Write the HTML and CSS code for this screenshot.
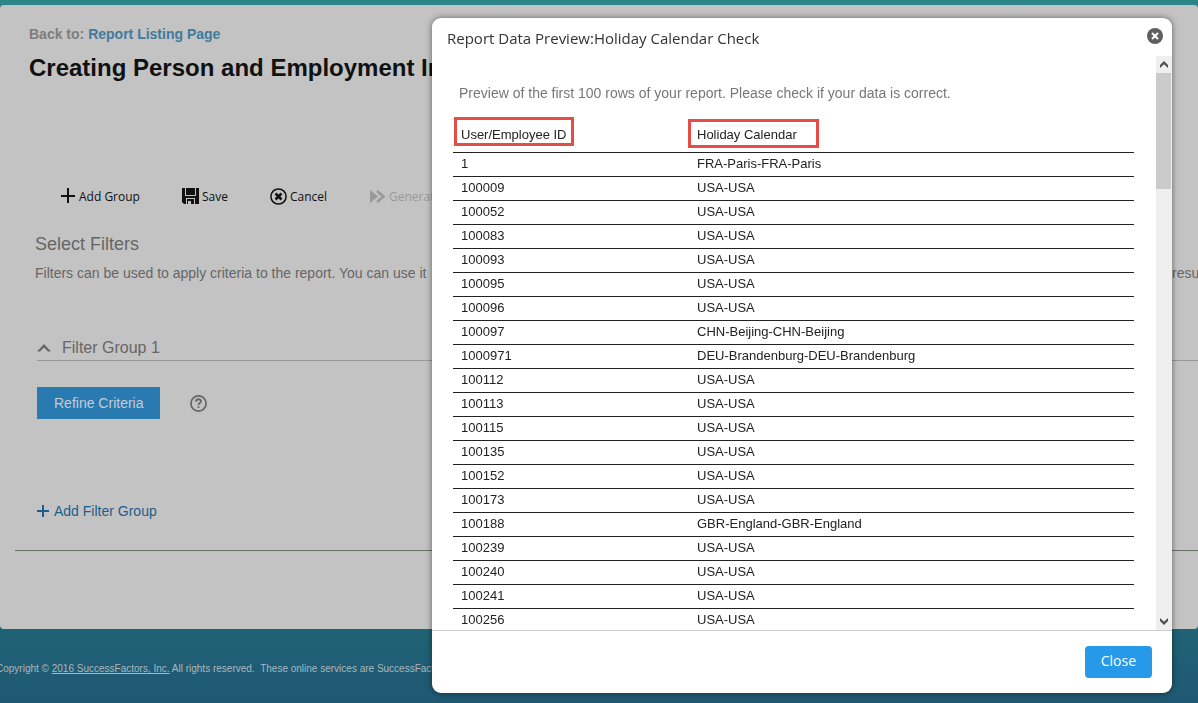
FILE: index.html
```html
<!DOCTYPE html>
<html lang="en">
<head>
<meta charset="utf-8">
<title>Report Data Preview</title>
<link rel="stylesheet" href="styles.css">
</head>
<body>
<main class="page">
  <p class="crumb">Back to: <a href="#">Report Listing Page</a></p>
  <h1 class="title">Creating Person and Employment Info</h1>
  <div class="toolbar">
    <button class="tool" type="button"><svg width="16" height="16" viewBox="0 0 16 16"><path d="M8 0v15M1 8h14" stroke="#111" stroke-width="2" fill="none"/></svg>Add Group</button>
    <button class="tool" type="button"><svg width="17" height="16" viewBox="0 0 17 16"><path d="M0 0h17v16H2L0 14z" fill="#111"/><path d="M3 0h1v7H3zM13 0h1v7h-1zM3 7h11v1H3zM4 10h9v1H4zM4 10h1v6H4zM12 10h1v6h-1zM6 13h3v3H6z" fill="#c3c3c3"/></svg>Save</button>
    <button class="tool" type="button"><svg width="17" height="17" viewBox="0 0 17 17"><circle cx="8.500" cy="8.500" r="7.600" fill="none" stroke="#111" stroke-width="1.500"/><path d="M5.500 5.500l6 6M11.500 5.500l-6 6" stroke="#111" stroke-width="2.600"/></svg>Cancel</button>
    <button class="tool tool-off" type="button" disabled><svg width="17" height="13" viewBox="0 0 17 13"><path d="M1 0l8 6.500L1 13z" fill="#999"/><path d="M8 1l6.500 5.500L8 12" fill="none" stroke="#999" stroke-width="2.600"/></svg>Generate</button>
  </div>
  <section class="filters">
    <h2 class="heading">Select Filters</h2>
    <p class="hint"><span class="hint-start">Filters can be used to apply criteria to the report. You can use it</span><span class="hint-end">results</span></p>
    <div class="group">
      <button class="group-head" type="button"><svg width="14" height="8" viewBox="0 0 14 8"><path d="M0 7.500L7 0l7 7.500h-3L7 3.500 3 7.500z" fill="#666"/></svg>Filter Group 1</button>
      <div class="group-body">
        <button class="refine" type="button">Refine Criteria</button>
        <button class="help" type="button" aria-label="Help"><svg width="17" height="17" viewBox="0 0 17 17"><circle cx="8.500" cy="8.500" r="7.600" fill="none" stroke="#666" stroke-width="1.700"/><path d="M6 6.800c0-3.300 5-3.300 5-.5 0 1.800-2.500 1.700-2.500 3.700" fill="none" stroke="#666" stroke-width="1.800"/><path d="M7.600 11.200h1.800v1.800H7.600z" fill="#666"/></svg></button>
      </div>
      <button class="add" type="button"><svg width="12" height="12" viewBox="0 0 12 12"><path d="M6 0v12M0 6h12" stroke="#1b5f8c" stroke-width="2"/></svg>Add Filter Group</button>
    </div>
  </section>
  <hr class="rule">
</main>
<footer class="footer">Copyright © <a href="#">2016 SuccessFactors, Inc.</a> All rights reserved. &nbsp;These online services are SuccessFactors</footer>

<div class="overlay">
  <div class="dialog" role="dialog" aria-labelledby="dlg-title">
    <header class="dialog-head">
      <h2 class="dialog-title" id="dlg-title">Report Data Preview:Holiday Calendar Check</h2>
      <button class="dismiss" type="button" aria-label="Dismiss"><svg width="16" height="16" viewBox="0 0 16 16"><circle cx="8" cy="8" r="8" fill="#5f5f5f"/><path d="M5 5l6 6M11 5l-6 6" stroke="#fff" stroke-width="2"/></svg></button>
    </header>
    <div class="dialog-body">
      <div class="content">
        <p class="intro">Preview of the first 100 rows of your report. Please check if your data is correct.</p>
        <table class="data">
          <thead><tr><th class="col-id mark-id" scope="col">User/Employee ID</th><th class="mark-cal" scope="col">Holiday Calendar</th></tr></thead>
          <tbody>
            <tr><td>1</td><td>FRA-Paris-FRA-Paris</td></tr>
            <tr><td>100009</td><td>USA-USA</td></tr>
            <tr><td>100052</td><td>USA-USA</td></tr>
            <tr><td>100083</td><td>USA-USA</td></tr>
            <tr><td>100093</td><td>USA-USA</td></tr>
            <tr><td>100095</td><td>USA-USA</td></tr>
            <tr><td>100096</td><td>USA-USA</td></tr>
            <tr><td>100097</td><td>CHN-Beijing-CHN-Beijing</td></tr>
            <tr><td>1000971</td><td>DEU-Brandenburg-DEU-Brandenburg</td></tr>
            <tr><td>100112</td><td>USA-USA</td></tr>
            <tr><td>100113</td><td>USA-USA</td></tr>
            <tr><td>100115</td><td>USA-USA</td></tr>
            <tr><td>100135</td><td>USA-USA</td></tr>
            <tr><td>100152</td><td>USA-USA</td></tr>
            <tr><td>100173</td><td>USA-USA</td></tr>
            <tr><td>100188</td><td>GBR-England-GBR-England</td></tr>
            <tr><td>100239</td><td>USA-USA</td></tr>
            <tr><td>100240</td><td>USA-USA</td></tr>
            <tr><td>100241</td><td>USA-USA</td></tr>
            <tr><td>100256</td><td>USA-USA</td></tr>
          </tbody>
        </table>
      </div>
      <div class="scroll">
        <button class="arrow" type="button" aria-label="Scroll up"><svg width="8" height="7" viewBox="0 0 8 7"><path d="M0 4l4-4 4 4v3L4 3.200 0 7z" fill="#505050"/></svg></button>
        <div class="thumb"></div>
        <button class="arrow arrow-down" type="button" aria-label="Scroll down"><svg width="8" height="7" viewBox="0 0 8 7"><path d="M0 3l4 4 4-4V0L4 3.800 0 0z" fill="#505050"/></svg></button>
      </div>
    </div>
    <footer class="dialog-foot"><button class="close" type="button">Close</button></footer>
  </div>
</div>
</body>
</html>
```

FILE: styles.css
```css
*, *::after { box-sizing: border-box; }
html, body { height: 100%; }
body {
  margin: 0;
  padding-top: 5px;
  display: flex;
  flex-direction: column;
  overflow: hidden;
  background: linear-gradient(#2c8588, #206375 90%, #1f5873);
  font-family: "Liberation Sans", Arial, sans-serif;
  font-size: 14px;
  color: #666;
}
h1, h2, p { margin: 0; font-weight: normal; }
button {
  margin: 0;
  padding: 0;
  border: 0;
  background: none;
  color: inherit;
  font: inherit;
  display: flex;
  align-items: center;
}
svg { display: block; flex: none; }

.page {
  flex: 1;
  background: #c3c3c3;
  border-radius: 4px;
  padding-top: 20px;
}
.crumb { padding-left: 29px; line-height: 18px; font-weight: bold; color: #7d7d7d; }
.crumb a { color: #417b9c; text-decoration: none; }
.title {
  padding: 10px 0 0 29px;
  font-size: 24px;
  line-height: 30px;
  font-weight: bold;
  color: #111;
  white-space: nowrap;
}
.toolbar { display: flex; align-items: center; gap: 42px; height: 24px; margin: 101px 0 0 60px; }
.tool { gap: 3px; font: 12px "Open Sans", "Noto Sans", sans-serif; color: #111; }
.tool-off { color: #999; }
.filters { padding: 26px 0 0 35px; }
.heading { font-size: 18px; line-height: 20px; }
.hint { display: flex; margin-top: 10px; line-height: 18px; white-space: nowrap; }
.hint-start { flex: 1; }
.hint-end { width: 26px; }
.group { padding: 54px 0 0 2px; }
.group-head {
  width: 100%;
  height: 25px;
  gap: 11px;
  border-bottom: 1px solid #999;
  font-size: 16px;
}
.group-body { display: flex; align-items: center; gap: 30px; margin-top: 26px; }
.refine { height: 32px; padding: 0 17px; background: #2a7ab2; color: #c3ccd2; }
.add { gap: 5px; margin-top: 83px; line-height: 18px; color: #1b5f8c; }
.rule { height: 1px; margin: 30px 0 0 15px; border: 0; background: #687068; }
.footer {
  height: 74px;
  padding-top: 32px;
  margin-left: -4px;
  font-size: 10px;
  line-height: 16px;
  white-space: nowrap;
  color: #a9b8c0;
  background: linear-gradient(#206375, #1f5873);
}
.footer a { color: inherit; }

.overlay {
  position: fixed;
  inset: 0;
  display: flex;
  justify-content: flex-end;
  padding: 18px 26px 10px;
}
.dialog {
  width: 740px;
  display: flex;
  flex-direction: column;
  background: #fff;
  border-radius: 9px;
  box-shadow: 0 0 6px rgba(0, 0, 0, 0.5);
}
.dialog-head {
  height: 38px;
  flex: none;
  display: flex;
  align-items: flex-start;
  justify-content: space-between;
  padding: 8px 9px 0 15px;
}
.dialog-title { font: 15px/24px "Open Sans", "Noto Sans", sans-serif; color: #333; }
.dismiss { height: 20px; }
.dialog-body { flex: 1; min-height: 0; display: flex; }
.content { flex: 1; overflow: hidden; padding: 28px 22px 0 21px; }
.intro { padding-left: 6px; line-height: 18px; color: #777; }
.data { width: 100%; margin-top: 14px; border-collapse: collapse; font-size: 13px; color: #222; }
.data th { position: relative; height: 36px; padding: 2px 8px 0; font-weight: normal; text-align: left; }
.data td { height: 24px; padding: 0 8px; border-top: 1px solid #222; line-height: 20px; }
.col-id { width: 236px; }
.mark-id::after, .mark-cal::after {
  content: "";
  position: absolute;
  height: 29px;
  border: 3px solid #e54d47;
}
.mark-id::after { left: 1px; top: 1px; width: 120px; }
.mark-cal::after { left: -1px; top: 3px; width: 131px; }
.scroll { width: 16px; display: flex; flex-direction: column; background: #efefef; }
.arrow { height: 17px; justify-content: center; }
.arrow-down { margin-top: auto; }
.thumb { height: 116px; margin-right: 1px; background: #cbcbcb; }
.dialog-foot {
  height: 63px;
  flex: none;
  display: flex;
  align-items: center;
  justify-content: flex-end;
  padding-right: 20px;
  border-top: 1px solid #ccc;
}
.close {
  height: 32px;
  padding: 0 16px 3px;
  border-radius: 4px;
  background: #2699e8;
  color: #fff;
  font: 14px "Open Sans", "Noto Sans", sans-serif;
}
```
